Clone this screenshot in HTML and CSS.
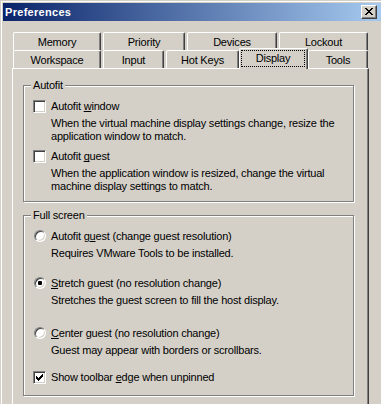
FILE: index.html
```html
<!DOCTYPE html>
<html>
<head>
<meta charset="utf-8">
<title>Preferences</title>
<link rel="stylesheet" href="styles.css">
</head>
<body>
<div class="window">
  <div class="titlebar">
    <span class="title">Preferences</span>
    <span class="close"><svg class="close-glyph" width="8" height="7" viewBox="0 0 8 7" shape-rendering="crispEdges"><path d="M0 0h2v1H0z M6 0h2v1H6z M1 1h2v1H1z M5 1h2v1H5z M2 2h4v1H2z M3 3h2v1H3z M2 4h4v1H2z M1 5h2v1H1z M5 5h2v1H5z M0 6h2v1H0z M6 6h2v1H6z" fill="#000"/></svg></span>
  </div>

  <div class="tabctl">
    <div class="tabrow">
      <div class="tab t-memory">Memory</div>
      <div class="tab t-priority">Priority</div>
      <div class="tab t-devices">Devices</div>
      <div class="tab t-lockout">Lockout</div>
    </div>
    <div class="tabrow">
      <div class="tab t-workspace">Workspace</div>
      <div class="tab t-input">Input</div>
      <div class="tab t-hotkeys">Hot Keys</div>
      <div class="tab t-display sel"><div class="focus">Display</div></div>
      <div class="tab t-tools">Tools</div>
    </div>

    <div class="panel">
      <div class="group g-autofit">
        <div class="group-title">Autofit</div>
        <div class="opt">
          <span class="ctl check"></span>
          <div class="opt-body">
            <div class="opt-label">Autofit <u>w</u>indow</div>
            <div class="desc">When the virtual machine display settings change, resize the<br>application window to match.</div>
          </div>
        </div>
        <div class="opt sp-7">
          <span class="ctl check"></span>
          <div class="opt-body">
            <div class="opt-label">Autofit <u>g</u>uest</div>
            <div class="desc">When the application window is resized, change the virtual<br>machine display settings to match.</div>
          </div>
        </div>
      </div>

      <div class="group g-full">
        <div class="group-title">Full screen</div>
        <div class="opt">
          <span class="ctl"><span class="radio"></span></span>
          <div class="opt-body">
            <div class="opt-label">Autofit g<u>u</u>est (change guest resolution)</div>
            <div class="desc">Requires VMware Tools to be installed.</div>
          </div>
        </div>
        <div class="opt sp-17">
          <span class="ctl"><span class="radio on"><span class="dot"></span></span></span>
          <div class="opt-body">
            <div class="opt-label"><u>S</u>tretch guest (no resolution change)</div>
            <div class="desc">Stretches the guest screen to fill the host display.</div>
          </div>
        </div>
        <div class="opt sp-20">
          <span class="ctl"><span class="radio"></span></span>
          <div class="opt-body">
            <div class="opt-label"><u>C</u>enter guest (no resolution change)</div>
            <div class="desc">Guest may appear with borders or scrollbars.</div>
          </div>
        </div>
        <div class="opt sp-14">
          <span class="ctl check"><svg class="tick" width="7" height="7" viewBox="0 0 7 7" shape-rendering="crispEdges"><path d="M0 2h1v3H0z M1 3h1v3H1z M2 4h1v3H2z M3 3h1v3H3z M4 2h1v3H4z M5 1h1v3H5z M6 0h1v3H6z" fill="#000"/></svg></span>
          <div class="opt-body">
            <div class="opt-label">Show toolbar <u>e</u>dge when unpinned</div>
          </div>
        </div>
      </div>
    </div>
  </div>
</div>
</body>
</html>
```

FILE: styles.css
```css
* { box-sizing: border-box; }

html, body {
  margin: 0;
  height: 100%;
  overflow: hidden;
  background: #d4d0c8;
}

body {
  font: 11px/13px "Liberation Sans", Arial, sans-serif;
  letter-spacing: -0.2px;
  color: #000;
}

u {
  text-decoration: underline;
  text-underline-offset: 1px;
  text-decoration-skip-ink: none;
}

.window {
  height: 404px;
  padding: 3px 0 0 3px;
  background: #d4d0c8;
  box-shadow: inset 1px 1px 0 #d4d0c8, inset 2px 2px 0 #fff;
}

/* title bar */
.titlebar {
  height: 18px;
  display: flex;
  align-items: center;
  justify-content: space-between;
  padding: 0 4px 0 2px;
  background: linear-gradient(to right, #0a246a, #a6caf0);
}

.title {
  color: #fff;
  font-weight: bold;
  letter-spacing: 0.3px;
}

.close {
  width: 16px;
  height: 14px;
  background: #d4d0c8;
  border: 1px solid;
  border-color: #fff #404040 #404040 #fff;
  box-shadow: inset -1px -1px 0 #808080;
  padding: 2px 0 0 3px;
}

.close-glyph { display: block; }

/* tab control */
.tabctl {
  margin: 11px 0 0 9px;
  width: 357px;
}

.tabrow {
  display: flex;
  gap: 2px;
  padding-left: 1px;
}

.tab {
  height: 18px;
  border: 1px solid #fff;
  border-bottom: 0;
  border-right-color: #404040;
  box-shadow: inset -1px 0 0 #808080;
  border-radius: 2px 2px 0 0;
  text-align: center;
  padding-top: 3px;
  background: #d4d0c8;
}

.t-memory { width: 88px; }
.t-priority { width: 82px; }
.t-devices { width: 90px; }
.t-lockout { width: 89px; }

.t-workspace { width: 88px; }
.t-input { width: 61px; }
.t-hotkeys { width: 73px; }
.t-display { width: 65px; }
.t-tools { width: 60px; }

.tab.sel {
  width: 69px;
  height: 21px;
  margin: -2px -2px -1px;
  position: relative;
  z-index: 1;
  padding: 1px 2px 2px 1px;
}

.focus {
  height: 17px;
  border: 1px dotted #000;
  padding-top: 1px;
}

.panel {
  height: 340px;
  border-top: 1px solid #fff;
  border-left: 1px solid #fff;
  border-right: 1px solid #404040;
  box-shadow: inset -1px 0 0 #808080;
  padding: 16px 0 0 10px;
}

/* group boxes */
.group {
  position: relative;
  width: 331px;
  border: 1px solid #808080;
  box-shadow: inset 1px 1px 0 #fff, 1px 1px 0 #fff;
}

.group-title {
  position: absolute;
  top: -7px;
  left: 7px;
  padding: 0 2px;
  background: #d4d0c8;
}

.g-autofit { padding: 14px 0 8px 9px; }
.g-full { margin-top: 13px; padding: 14px 0 11px 9px; }

/* options */
.opt {
  display: flex;
  gap: 5px;
}

.sp-7 { margin-top: 7px; }
.sp-14 { margin-top: 14px; }
.sp-17 { margin-top: 17px; }
.sp-20 { margin-top: 20px; }

.ctl {
  flex: none;
  width: 13px;
  height: 13px;
}

.check {
  background: #fff;
  border: 1px solid;
  border-color: #808080 #fff #fff #808080;
  box-shadow: inset 1px 1px 0 #404040, inset -1px -1px 0 #d4d0c8;
  padding: 2px 0 0 2px;
}

.tick { display: block; }

.radio {
  display: block;
  width: 12px;
  height: 12px;
  margin-left: 1px;
  border-radius: 50%;
  background: #fff;
  border: 1px solid;
  border-color: #808080 #fff #fff #808080;
  box-shadow: inset 1px 1px 0 #404040, inset -1px -1px 0 #d4d0c8;
  padding: 3px;
}

.dot {
  display: block;
  width: 4px;
  height: 4px;
  border-radius: 1px;
  background: #000;
}

.desc {
  margin-top: 4px;
  white-space: nowrap;
}
```
